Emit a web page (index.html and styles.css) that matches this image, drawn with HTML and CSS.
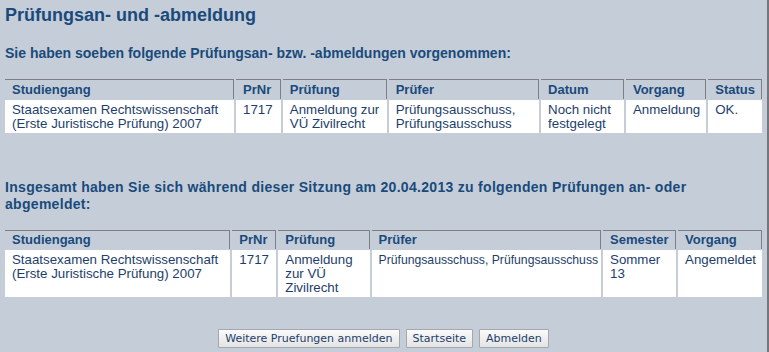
FILE: index.html
```html
<!DOCTYPE html>
<html lang="de">
<head>
    <meta charset="UTF-8">
    <title>Prüfungsan- und -abmeldung</title>
    <link rel="stylesheet" href="styles.css">
</head>
<body>
<div class="page">

<h1>Prüfungsan- und -abmeldung</h1>

<h2>Sie haben soeben folgende Prüfungsan- bzw. -abmeldungen vorgenommen:</h2>

<table class="list list-now">
    <tr>
        <th class="c-studiengang">Studiengang</th>
        <th class="c-prnr">PrNr</th>
        <th class="c-pruefung">Prüfung</th>
        <th class="c-pruefer">Prüfer</th>
        <th class="c-datum">Datum</th>
        <th class="c-vorgang">Vorgang</th>
        <th class="c-status">Status</th>
    </tr>
    <tr>
        <td>Staatsexamen Rechtswissenschaft (Erste Juristische Prüfung) 2007</td>
        <td>1717</td>
        <td>Anmeldung zur VÜ Zivilrecht</td>
        <td>Prüfungsausschuss, Prüfungsausschuss</td>
        <td>Noch nicht festgelegt</td>
        <td>Anmeldung</td>
        <td>OK.</td>
    </tr>
</table>

<h2 class="second">Insgesamt haben Sie sich während dieser Sitzung am 20.04.2013 zu folgenden Prüfungen an- oder abgemeldet:</h2>

<table class="list list-all">
    <tr>
        <th class="c-studiengang">Studiengang</th>
        <th class="c-prnr">PrNr</th>
        <th class="c-pruefung">Prüfung</th>
        <th class="c-pruefer">Prüfer</th>
        <th class="c-semester">Semester</th>
        <th class="c-vorgang">Vorgang</th>
    </tr>
    <tr>
        <td>Staatsexamen Rechtswissenschaft (Erste Juristische Prüfung) 2007</td>
        <td>1717</td>
        <td>Anmeldung zur VÜ Zivilrecht</td>
        <td class="oneline">Prüfungsausschuss, Prüfungsausschuss</td>
        <td>Sommer 13</td>
        <td>Angemeldet</td>
    </tr>
</table>

<div class="actions">
    <button>Weitere Pruefungen anmelden</button>
    <button>Startseite</button>
    <button>Abmelden</button>
</div>

</div>
</body>
</html>
```

FILE: styles.css
```css
* {
  box-sizing: border-box;
}
html, body {
  margin: 0;
  height: 100%;
}
body {
  font-family: "Liberation Sans", Arial, sans-serif;
  background-color: #c5ced8;
  color: #1d3e6b;
}
.page {
  min-height: 100%;
  padding: 4px 5px 0 5px;
  border-right: 2px solid #74777a;
  width: 769px;
}
h1 {
  font-size: 18px;
  color: #1a4a7c;
  margin: 0;
  line-height: 22px;
}
h2 {
  font-size: 14px;
  color: #1a4a7c;
  margin: 19px 0 0 0;
  line-height: 17px;
}
h2.second {
  margin-top: 45px;
  letter-spacing: 0.3px;
}

.list {
  border-collapse: separate;
  border-spacing: 2px 1px;
  margin: 16px 0 0 -2px;
  width: 761px;
  font-size: 13.3px;
  line-height: 14px;
}
.list th {
  text-align: left;
  color: #1a4a7c;
  font-size: 13px;
  border-top: 1px solid #7c7f83;
  border-right: 1px solid #7c7f83;
  padding: 2px 6px 2px 7px;
  height: 20px;
}
.list td {
  background-color: #fff;
  vertical-align: top;
  padding: 3px 6px 1px 7px;
}
.list td.oneline {
  font-size: 12.2px;
  padding-right: 2px;
}
.list-now td {
  height: 33px;
}
.list-now .c-studiengang { width: 238px; }
.list-now .c-prnr { width: 45px; }
.list-now .c-pruefung { width: 106px; }
.list-now .c-pruefer { width: 152px; }
.list-now .c-datum { width: 84px; }
.list-now .c-vorgang { width: 73px; }

.list-all {
  margin-top: 16px;
}
.list-all th {
  height: 19px;
}
.list-all td {
  height: 47px;
}
.list-all .c-studiengang { width: 231px; }
.list-all .c-prnr { width: 44px; }
.list-all .c-pruefung { width: 92px; }
.list-all .c-pruefer { width: 236px; }
.list-all .c-semester { width: 73px; }

.actions {
  display: flex;
  justify-content: center;
  gap: 6px;
  margin-top: 31px;
}
.actions button {
  font-family: "DejaVu Sans", sans-serif;
  font-size: 11px;
  color: #1d3e6b;
  background: linear-gradient(#fbfbfb, #e3e3e3);
  border: 1px solid #a4a8ad;
  border-radius: 1px;
  padding: 1px 6px;
  height: 19px;
}
```
